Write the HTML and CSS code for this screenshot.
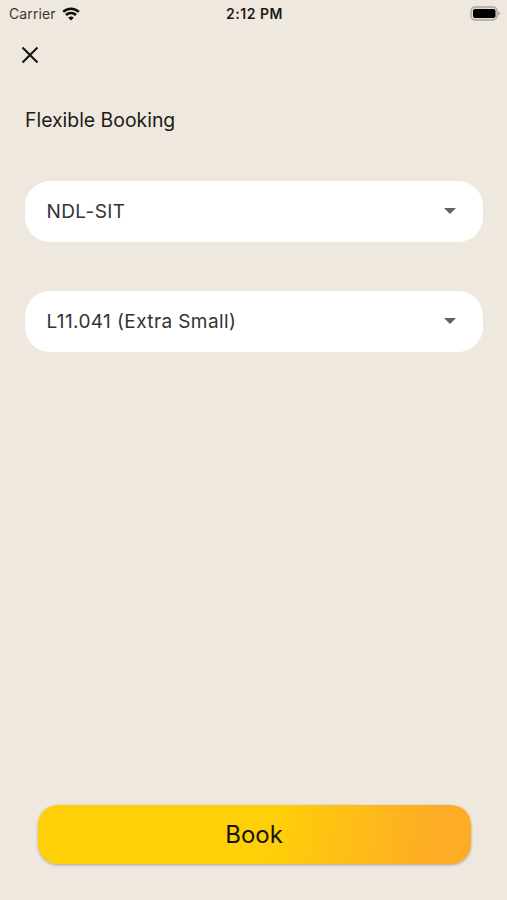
FILE: index.html
```html
<!DOCTYPE html>
<html lang="en">
<head>
  <meta charset="UTF-8" />
  <meta name="viewport" content="width=device-width, initial-scale=1.0"/>
  <title>Flexible Booking</title>
  <link rel="stylesheet" href="styles.css">
</head>
<body>
  <div class="status-bar">
    <div class="carrier">
      <span>Carrier</span>
      <svg class="wifi" viewBox="0 0 18 14">
        <path d="M1.2 4.9 A11.2 11.2 0 0 1 16.8 4.9" />
        <path d="M4 8 A7.2 7.2 0 0 1 14 8" />
        <path class="dot" d="M9 13.6 L6.2 10.8 A4 4 0 0 1 11.8 10.8 Z" />
      </svg>
    </div>
    <div class="time">2:12 PM</div>
    <div class="battery">
      <svg viewBox="0 0 30 15">
        <rect class="shell" x="1" y="1" width="26" height="13" rx="4" />
        <rect x="3" y="3" width="22.5" height="9" rx="2" />
        <path class="cap" d="M28 5.2 Q30 6 30 7.5 Q30 9 28 9.8 Z" />
      </svg>
    </div>
  </div>

  <button class="close" aria-label="Close">
    <svg viewBox="0 0 18 18">
      <path d="M1.5 1.5 L16.5 16.5 M16.5 1.5 L1.5 16.5" />
    </svg>
  </button>

  <main>
    <h1>Flexible Booking</h1>

    <div class="select">
      <span class="building">NDL-SIT</span>
      <svg class="arrow" viewBox="0 0 12 6"><path d="M0 0 H12 L6 6 Z" /></svg>
    </div>

    <div class="select">
      <span class="locker">L11.041 (Extra Small)</span>
      <svg class="arrow" viewBox="0 0 12 6"><path d="M0 0 H12 L6 6 Z" /></svg>
    </div>
  </main>

  <button class="book"><span>Book</span></button>
</body>
</html>
```
FILE: styles.css
```css
* {
  box-sizing: border-box;
}

body {
  font-family: Inter, sans-serif;
  margin: 0;
  height: 900px;
  display: flex;
  flex-direction: column;
  background-color: #efe8df;
  color: #1d1b19;
}

button {
  font-family: inherit;
  border: none;
  padding: 0;
  cursor: pointer;
}

svg {
  display: block;
}

.status-bar {
  display: grid;
  grid-template-columns: 1fr auto 1fr;
  align-items: center;
  height: 27px;
  padding: 0 7px 0 9px;
}

.carrier {
  display: flex;
  align-items: center;
  gap: 6px;
  font-size: 14px;
  letter-spacing: 0.1px;
  color: #3a3733;
}

.wifi {
  width: 18px;
  height: 14px;
  fill: none;
  stroke: #0d0c0b;
  stroke-width: 2.6;
}

.wifi .dot {
  fill: #0d0c0b;
  stroke: none;
}

.time {
  font-size: 14px;
  font-weight: 600;
  letter-spacing: 0.5px;
}

.battery {
  justify-self: end;
}

.battery svg {
  width: 30px;
  height: 15px;
}

.shell {
  fill: #e3ddd4;
  stroke: #aaa59e;
  stroke-width: 1.4;
}

.cap {
  fill: #aaa59e;
}

.close {
  width: 18px;
  height: 18px;
  margin: 19px 0 0 21px;
  background: none;
}

.close svg {
  width: 18px;
  height: 18px;
  fill: none;
  stroke: #1a1816;
  stroke-width: 2.2;
}

main {
  flex: 1;
  padding: 44px 24.5px 0 25px;
}

h1 {
  margin: 0 0 48.5px;
  font-size: 19.4px;
  font-weight: 400;
  line-height: 24px;
}

.select {
  display: flex;
  align-items: center;
  justify-content: space-between;
  height: 61px;
  margin-bottom: 49px;
  padding: 0 27px 0 21.5px;
  border-radius: 25px;
  background-color: white;
  color: #333;
  font-size: 19px;
  letter-spacing: 0.4px;
}

.arrow {
  width: 12px;
  height: 6px;
  fill: #616161;
}

.book {
  height: 59px;
  margin: 0 36.5px 36.5px 37.5px;
  border-radius: 20px;
  background: linear-gradient(100deg, #ffcf08 54%, #fdac25 90%);
  box-shadow: 0 1px 3px rgba(0, 0, 0, 0.3);
  color: #17130a;
  font-size: 24px;
}
```
